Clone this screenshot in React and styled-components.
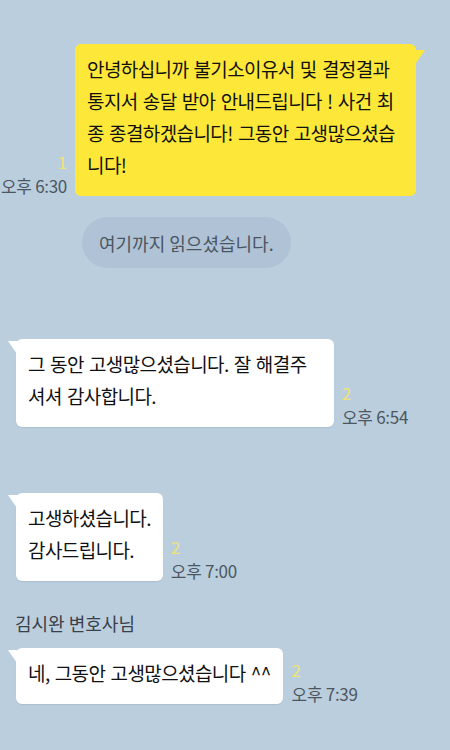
import React from "react";
import styled, { createGlobalStyle } from "styled-components";

const Global = createGlobalStyle`
  html, body { margin: 0; padding: 0; background: #bacede; }
  body { font-family: "Noto Sans CJK KR", "Noto Sans", sans-serif; }
`;

const Page = styled.div`
  width: 450px;
  min-height: 750px;
  box-sizing: border-box;
  background: #bacede;
  padding-top: 44px;
  display: flex;
  flex-direction: column;
`;

const Row = styled.div`
  display: flex;
  align-items: flex-end;
  gap: ${(p) => (p.$gap != null ? p.$gap : 8)}px;
  margin-top: ${(p) => p.$mt || 0}px;
  justify-content: ${(p) => (p.$mine ? "flex-end" : "flex-start")};
  padding: ${(p) => (p.$mine ? "0 34px 0 0" : "0 0 0 16px")};
`;

const Bubble = styled.div`
  position: relative;
  box-sizing: border-box;
  width: ${(p) => (p.$width ? `${p.$width}px` : "auto")};
  padding: 9px 12px 15px 12px;
  border-radius: 6px;
  background: ${(p) => (p.$mine ? "#fde83a" : "#ffffff")};
  box-shadow: ${(p) => (p.$mine ? "none" : "0 1px 1px rgba(60, 80, 100, 0.12)")};
  color: #111111;
  font-size: 19px;
  line-height: 32px;
  letter-spacing: -0.6px;
  word-spacing: 1.5px;
  white-space: nowrap;

  &::after {
    content: "";
    position: absolute;
    top: ${(p) => (p.$mine ? 6 : 2)}px;
    width: 9px;
    height: 13px;
    background: inherit;
    ${(p) =>
      p.$mine
        ? `right: -9px; clip-path: polygon(0 0, 100% 0, 0 100%);`
        : `left: -8px; clip-path: polygon(0 0, 100% 0, 100% 100%);`}
  }
`;

const Meta = styled.div`
  display: flex;
  flex-direction: column;
  gap: 4px;
  align-items: ${(p) => (p.$mine ? "flex-end" : "flex-start")};
  font-size: 17px;
  line-height: 20px;
  white-space: nowrap;
`;

const Unread = styled.span`
  color: #efe27a;
`;

const Time = styled.span`
  color: #4d5660;
  letter-spacing: -0.3px;
`;

const ReadMarker = styled.div`
  align-self: flex-start;
  margin: 21px 0 0 82px;
  height: 51px;
  padding: 0 17px;
  display: flex;
  align-items: center;
  border-radius: 26px;
  background: #b0c3d6;
  color: #4a5562;
  font-size: 18px;
`;

const SenderName = styled.div`
  margin: 32px 0 0 15px;
  font-size: 18px;
  line-height: 20px;
  color: #3a4047;
`;

export default function App() {
  return (
    <>
      <Global />
      <Page>
        <Row $mine>
          <Meta $mine>
            <Unread>1</Unread>
            <Time>오후 6:30</Time>
          </Meta>
          <Bubble $mine $width={341}>
            안녕하십니까 불기소이유서 및 결정결과
            <br />
            통지서 송달 받아 안내드립니다 ! 사건 최
            <br />
            종 종결하겠습니다! 그동안 고생많으셨습
            <br />
            니다!
          </Bubble>
        </Row>

        <ReadMarker>여기까지 읽으셨습니다.</ReadMarker>

        <Row $mt={71}>
          <Bubble $width={318}>
            그 동안 고생많으셨습니다. 잘 해결주
            <br />
            셔셔 감사합니다.
          </Bubble>
          <Meta>
            <Unread>2</Unread>
            <Time>오후 6:54</Time>
          </Meta>
        </Row>

        <Row $mt={66}>
          <Bubble>
            고생하셨습니다.
            <br />
            감사드립니다.
          </Bubble>
          <Meta>
            <Unread>2</Unread>
            <Time>오후 7:00</Time>
          </Meta>
        </Row>

        <SenderName>김시완 변호사님</SenderName>

        <Row $mt={15} $gap={9}>
          <Bubble>네, 그동안 고생많으셨습니다 ^^</Bubble>
          <Meta>
            <Unread>2</Unread>
            <Time>오후 7:39</Time>
          </Meta>
        </Row>
      </Page>
    </>
  );
}
